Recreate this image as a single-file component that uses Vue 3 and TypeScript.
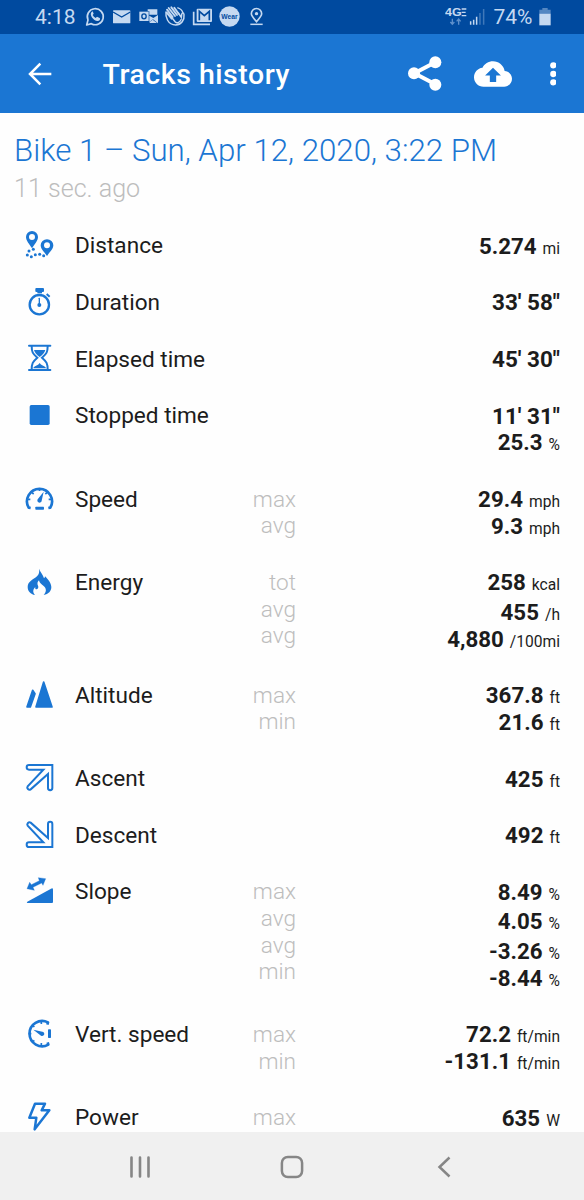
<script setup lang="ts">
interface Value {
  num: string
  unit?: string
  spaced?: boolean
}
interface Row {
  icon: string
  label: string
  subs?: string[]
  values: Value[]
}

const rows: Row[] = [
  { icon: 'distance', label: 'Distance', values: [{ num: '5.274', unit: 'mi' }] },
  { icon: 'duration', label: 'Duration', values: [{ num: '33\' 58"' }] },
  { icon: 'elapsed', label: 'Elapsed time', values: [{ num: '45\' 30"' }] },
  { icon: 'stopped', label: 'Stopped time', values: [{ num: '11\' 31"' }, { num: '25.3', unit: '%' }] },
  { icon: 'speed', label: 'Speed', subs: ['max', 'avg'], values: [{ num: '29.4', unit: 'mph' }, { num: '9.3', unit: 'mph' }] },
  {
    icon: 'energy',
    label: 'Energy',
    subs: ['tot', 'avg', 'avg'],
    values: [{ num: '258', unit: 'kcal' }, { num: '455', unit: '/h', spaced: true }, { num: '4,880', unit: '/100mi' }],
  },
  { icon: 'altitude', label: 'Altitude', subs: ['max', 'min'], values: [{ num: '367.8', unit: 'ft' }, { num: '21.6', unit: 'ft' }] },
  { icon: 'ascent', label: 'Ascent', values: [{ num: '425', unit: 'ft' }] },
  { icon: 'descent', label: 'Descent', values: [{ num: '492', unit: 'ft' }] },
  {
    icon: 'slope',
    label: 'Slope',
    subs: ['max', 'avg', 'avg', 'min'],
    values: [
      { num: '8.49', unit: '%' },
      { num: '4.05', unit: '%', spaced: true },
      { num: '-3.26', unit: '%', spaced: true },
      { num: '-8.44', unit: '%' },
    ],
  },
  { icon: 'vert', label: 'Vert. speed', subs: ['max', 'min'], values: [{ num: '72.2', unit: 'ft/min' }, { num: '-131.1', unit: 'ft/min' }] },
  { icon: 'power', label: 'Power', subs: ['max'], values: [{ num: '635', unit: 'W' }] },
]
</script>

<template>
  <div class="screen">
    <div class="status">
      <span class="clock">4:18</span>
      <div class="notifs">
        <svg viewBox="0 0 81 102">
          <path d="M17 75l4-15A24 24 0 1 1 31 71z" fill="none" stroke="currentColor" stroke-width="5" stroke-linejoin="round" />
          <path d="M32 36c-9 8 7 29 19 27 7-1 7-8 5-9l-8-4-4 4c-4-2-7-5-9-9l3-4-3-7z" fill="currentColor" />
        </svg>
        <svg viewBox="0 0 81 102">
          <rect x="15" y="31" width="52" height="39" rx="2" fill="currentColor" />
          <path d="M15 36l26 15 26-15" fill="none" stroke="#004a9f" stroke-width="4" />
        </svg>
        <svg viewBox="0 0 81 102">
          <path d="M38 28h29v16H43V34h-5zM43 47l12 7 14-9v25L54 58 43 66z" fill="currentColor" />
          <path d="M44 66l9-7 13 10H44z" fill="currentColor" />
          <rect x="13" y="35" width="28" height="28" fill="currentColor" />
          <ellipse cx="27" cy="49" rx="6.500" ry="7.500" fill="none" stroke="#004a9f" stroke-width="4" />
        </svg>
        <svg viewBox="0 0 81 102">
          <path d="M15 29l17 22M20 24l19 24M28 22l17 23M37 23l13 18M14 38l15 18" fill="none" stroke="currentColor" stroke-width="5.500" stroke-linecap="round" />
          <path d="M12 36c-2 14 5 39 29 39 17 0 27-16 25-31-1-7-6-6-7-1l-1 9-9-13M28 51l12 15c5 5 15 0 17-7" fill="none" stroke="currentColor" stroke-width="4.500" stroke-linecap="round" />
          <path d="M46 23c10 3 15 9 17 16" fill="none" stroke="currentColor" stroke-width="4" />
        </svg>
        <svg viewBox="0 0 81 102">
          <path d="M14 35v38h49" fill="none" stroke="currentColor" stroke-width="5" />
          <rect x="23" y="26" width="46" height="40" rx="3" fill="currentColor" />
          <path d="M31 61V34l15 13 15-13v27" fill="none" stroke="#004a9f" stroke-width="5" />
        </svg>
        <svg viewBox="0 0 81 102">
          <circle cx="40.500" cy="49.500" r="30.500" fill="currentColor" />
          <text x="16" y="56" textLength="49" lengthAdjust="spacingAndGlyphs" class="wear">Wear</text>
        </svg>
        <svg viewBox="0 0 81 102">
          <path d="M40.500 65C30 53 25 47 25 41a15.500 15.500 0 0 1 31 0c0 6-5 12-15.500 24z" fill="none" stroke="currentColor" stroke-width="5" />
          <circle cx="40.500" cy="41" r="5" fill="currentColor" />
          <path d="M22 73h37" stroke="currentColor" stroke-width="4.500" />
        </svg>
      </div>
      <div class="right">
        <svg class="net" viewBox="0 0 130 102">
          <text x="0" y="48" textLength="50" lengthAdjust="spacingAndGlyphs" class="fourg">4G</text>
          <path d="M50 27h14M50 37h12M50 47h14" stroke="currentColor" stroke-width="4" />
          <path d="M22 56v16m-6-6l6 7 6-7M41 74V58m-6 6l6-7 6 7" fill="none" stroke="#5d8fcb" stroke-width="4" />
          <path d="M77 64v10M86 59v15M95 50v24" stroke="currentColor" stroke-width="4.500" />
          <path d="M105 39v35M116 27v47" stroke="#3f78b9" stroke-width="4.500" />
        </svg>
        <span class="pct">74%</span>
        <svg class="batt" viewBox="0 0 36 102">
          <path d="M10 24h16v5h9v12H1V29h9z" fill="#5487c2" />
          <path d="M1 41h34v35H1z" fill="currentColor" />
        </svg>
      </div>
    </div>

    <header class="toolbar">
      <svg class="back" viewBox="0 0 72 72">
        <path d="M70 36H6M37 5L6 36l31 31" fill="none" stroke="#fff" stroke-width="7.500" />
      </svg>
      <h1>Tracks history</h1>
      <svg class="share" viewBox="0 0 102 105">
        <path d="M82 19L19 52l63 33" fill="none" stroke="#fff" stroke-width="12" />
        <circle cx="82" cy="19" r="18" fill="#fff" />
        <circle cx="18" cy="52" r="18" fill="#fff" />
        <circle cx="82" cy="86" r="18" fill="#fff" />
      </svg>
      <svg class="cloud" viewBox="0 0 24 24">
        <path d="M19.350 10.040C18.670 6.590 15.640 4 12 4 9.110 4 6.600 5.640 5.350 8.040 2.340 8.360 0 10.910 0 14c0 3.310 2.690 6 6 6h13c2.760 0 5-2.240 5-5 0-2.640-2.050-4.780-4.650-4.960zM14 13v4h-4v-4H7l5-5 5 5h-3z" fill="#fff" />
      </svg>
      <svg class="more" viewBox="0 0 20 72">
        <circle cx="10" cy="10" r="9.500" fill="#fff" />
        <circle cx="10" cy="36" r="9.500" fill="#fff" />
        <circle cx="10" cy="61" r="9.500" fill="#fff" />
      </svg>
    </header>

    <main>
      <h2>Bike 1 – Sun, Apr 12, 2020, 3:22 PM</h2>
      <p class="ago">11 sec. ago</p>

      <div v-for="row in rows" :key="row.label" class="row">
        <svg class="icon" viewBox="0 0 90 96">
          <g v-if="row.icon === 'distance'" fill="currentColor">
            <path fill-rule="evenodd" d="M21 55C13 42 3 32 3 21a18 18 0 0 1 36 0c0 11-10 21-18 34zM21 12a9 9 0 1 0 0 18 9 9 0 0 0 0-18z" />
            <path fill-rule="evenodd" d="M66 78C58 66 47 57 47 46a19 18 0 0 1 38 0c0 11-11 20-19 32zM66 37a9 9 0 1 0 0 18 9 9 0 0 0 0-18z" />
            <circle cx="25" cy="58" r="4.500" />
            <circle cx="12" cy="63" r="4.500" />
            <circle cx="7" cy="75" r="4.500" />
            <circle cx="19" cy="80" r="4.500" />
            <circle cx="31" cy="74" r="4.500" />
            <circle cx="44" cy="73" r="4.500" />
            <circle cx="56" cy="77" r="4.500" />
          </g>
          <g v-else-if="row.icon === 'duration'" fill="none" stroke="currentColor">
            <circle cx="43" cy="53" r="29" stroke-width="7" />
            <rect x="31" y="3" width="26" height="12" rx="3" fill="currentColor" stroke="none" />
            <path d="M37 15h14v4H37z" fill="currentColor" stroke="none" />
            <path d="M65 21l9 8" stroke-width="6" />
            <circle cx="43" cy="54" r="6" fill="currentColor" stroke="none" />
            <path d="M43 34v20" stroke-width="4" stroke-linecap="round" />
          </g>
          <g v-else-if="row.icon === 'elapsed'" fill="none" stroke="currentColor">
            <path d="M12 8h64M12 81h64" stroke-width="6" stroke-linecap="round" />
            <path d="M20 9c0 18 3 23 17 35C23 56 20 62 20 80M68 9c0 18-3 23-17 35 14 12 17 18 17 36" stroke-width="6" />
            <path d="M27 21h34c-2 8-7 13-17 21-10-8-15-13-17-21z" fill="currentColor" stroke="none" />
            <path d="M25 76c1-8 11-5 19-16 8 11 18 8 19 16z" fill="currentColor" stroke="none" />
          </g>
          <rect v-else-if="row.icon === 'stopped'" x="14" y="15" width="60" height="60" rx="5" fill="currentColor" />
          <g v-else-if="row.icon === 'speed'" fill="none" stroke="currentColor">
            <path d="M17 75l-6-1A37.500 37.500 0 1 1 76 74l-6 1" stroke-width="8" stroke-linejoin="round" />
            <path d="M43.500 16v8M21 29l5 4M66 29l-5 4M8 49h8M79 49h-8" stroke-width="5" />
            <rect x="31" y="71" width="26" height="9" rx="2" fill="currentColor" stroke="none" />
            <path d="M56 26L50 53a6.500 6.500 0 1 1-12-4z" fill="currentColor" stroke="none" />
          </g>
          <path
            v-else-if="row.icon === 'energy'"
            fill="currentColor"
            d="M42 5C45 14 54 22 57 34c2-1 3-3 3-6 8 8 19 20 19 32 0 12-8 21-23 24 9-10 9-20-1-28-6-4-12-9-13-16-5 5-6 10-3 16 2 4 1 9-4 11-4 0-5-3-4-7-8 7-8 17-1 24C17 82 8 73 8 60 8 43 25 38 36 28c6-6 8-14 6-23z"
          />
          <g v-else-if="row.icon === 'altitude'" fill="currentColor" stroke="currentColor" stroke-width="5" stroke-linejoin="round">
            <path d="M56 6L81 81H33z" />
            <path d="M23 31l7 10-14 40H6z" />
          </g>
          <g
            v-else-if="row.icon === 'ascent' || row.icon === 'descent'"
            :transform="row.icon === 'descent' ? 'matrix(1 0 0 -1 0 87)' : undefined"
            fill="none"
            stroke="currentColor"
            stroke-width="6"
          >
            <path d="M12 6H82V75a6.500 6.500 0 0 1-13 0V33L17 79A6.500 6.500 0 0 1 8 70L55 20H12a7 7 0 0 1 0-14z" />
          </g>
          <g v-else-if="row.icon === 'slope'" fill="currentColor">
            <path d="M7 77L78 38q6-3 6 3v37q0 3-3 3H8q-5 0-1-4z" />
            <path d="M6 38l8-19 5 7 24-12-3-9 22 3-8 20-4-7-26 13 4 9z" stroke="currentColor" stroke-width="1" stroke-linejoin="round" />
          </g>
          <g v-else-if="row.icon === 'vert'" fill="none" stroke="currentColor">
            <path d="M67 17l2-7A38 38 0 1 0 70 77l-2-7" stroke-width="8" stroke-linejoin="round" />
            <path d="M11 44h8M49 7v8M49 80v-8M23 19l5 5M23 69l5-5" stroke-width="5" />
            <rect x="69" y="31" width="9" height="26" rx="2" fill="currentColor" stroke="none" />
            <path d="M25 32l27 6a6.500 6.500 0 1 1-4 12z" fill="currentColor" stroke="none" />
          </g>
          <path
            v-else
            d="M30 5H60L50 25H73L29 82 34 47H13z"
            fill="none"
            stroke="currentColor"
            stroke-width="7.500"
            stroke-linejoin="round"
          />
        </svg>
        <span class="label">{{ row.label }}</span>
        <div class="subs">
          <div v-for="(s, i) in row.subs" :key="i">{{ s }}</div>
        </div>
        <div class="values">
          <div v-for="(v, i) in row.values" :key="i" :class="{ spaced: v.spaced }">
            <b :class="{ time: !v.unit }">{{ v.num }}</b><span v-if="v.unit" class="unit">{{ v.unit }}</span>
          </div>
        </div>
      </div>
    </main>

    <nav>
      <svg viewBox="0 0 24 24"><path d="M3.500 2.500v19M12 2.500v19M20.500 2.500v19" stroke="#868686" stroke-width="2.600" stroke-linecap="round" /></svg>
      <svg viewBox="0 0 24 24"><rect x="1.900" y="1.900" width="20.200" height="20.200" rx="6" fill="none" stroke="#868686" stroke-width="2.500" /></svg>
      <svg viewBox="0 0 24 24"><path d="M17.500 2.500L7.500 12l10 9.500" fill="none" stroke="#868686" stroke-width="2.500" /></svg>
    </nav>
  </div>
</template>

<style>
body {
  margin: 0;
}
</style>

<style scoped>
.screen {
  width: 584px;
  height: 1200px;
  display: flex;
  flex-direction: column;
  overflow: hidden;
  background: #fefefe;
  color: #1c1c1c;
  font-family: Roboto, "Liberation Sans", sans-serif;
}
.status {
  flex: none;
  height: 34px;
  display: flex;
  align-items: center;
  background: #004a9f;
  color: #c5d9f1;
}
.clock {
  width: 45.5px;
  padding-left: 35px;
  font-size: 21px;
  line-height: 36px;
  white-space: nowrap;
}
.notifs {
  display: flex;
}
.notifs svg {
  width: 27px;
  height: 34px;
}
.wear {
  font: 700 19px "Liberation Sans", sans-serif;
  fill: #004a9f;
}
.right {
  margin-left: auto;
  margin-right: 33px;
  display: flex;
  align-items: center;
}
.net {
  width: 43.3px;
  height: 34px;
}
.fourg {
  font: 700 32px "Liberation Sans", sans-serif;
  fill: currentColor;
}
.pct {
  margin-left: 5.5px;
  width: 39.5px;
  font-size: 21px;
  line-height: 36px;
}
.batt {
  margin-left: 6px;
  width: 12px;
  height: 34px;
}
.toolbar {
  flex: none;
  height: 79px;
  display: flex;
  align-items: center;
  background: #1b76d3;
  color: #fff;
}
.back {
  width: 24px;
  height: 24px;
  margin-left: 28px;
}
h1 {
  margin: 3px 0 0 50.5px;
  width: 305.5px;
  font-size: 28.5px;
  font-weight: 500;
  letter-spacing: 0.52px;
  line-height: 40px;
}
.share {
  flex: none;
  width: 34px;
  height: 35px;
}
.cloud {
  flex: none;
  width: 38px;
  height: 38px;
  margin-left: 32px;
}
.more {
  flex: none;
  width: 6.700px;
  height: 24px;
  margin-left: 37.5px;
}
main {
  flex: 1;
  min-height: 0;
  overflow: hidden;
}
h2 {
  margin: 18px 0 0 14px;
  height: 40px;
  font-size: 31.25px;
  font-weight: 300;
  line-height: 40px;
  color: #1b76d3;
  white-space: nowrap;
}
.ago {
  margin: 0 0 25px 14px;
  height: 34px;
  font-size: 25.1px;
  font-weight: 300;
  line-height: 36px;
  color: #bdbdbd;
}
.row {
  display: flex;
  align-items: flex-start;
  padding: 2.650px 24px 27.350px 25px;
  line-height: 26.670px;
  font-size: 22.6px;
}
.icon {
  flex: none;
  width: 30px;
  height: 32px;
  margin: -2.650px 20px -8px 0;
  color: #1b76d3;
}
.label {
  width: 150px;
  margin: 0.6px 0 -0.6px;
}
.subs {
  width: 71px;
  margin: 0.6px 0 -0.6px;
  text-align: right;
  font-weight: 300;
  color: #bdbdbd;
}
.values {
  flex: 1;
  text-align: right;
}
.values div {
  height: 26.670px;
}
.values .spaced {
  padding-top: 3px;
}
b {
  font-size: 22.3px;
  font-weight: 700;
}
.time {
  font-size: 22.5px;
}
.unit {
  margin-left: 6px;
  font-size: 15.6px;
}
nav {
  flex: none;
  height: 68px;
  display: grid;
  grid-template-columns: repeat(3, 152px);
  justify-content: center;
  justify-items: center;
  align-items: center;
  padding-top: 1px;
  box-sizing: border-box;
  background: #f0f0f0;
}
nav svg {
  width: 24px;
  height: 24px;
}
</style>
